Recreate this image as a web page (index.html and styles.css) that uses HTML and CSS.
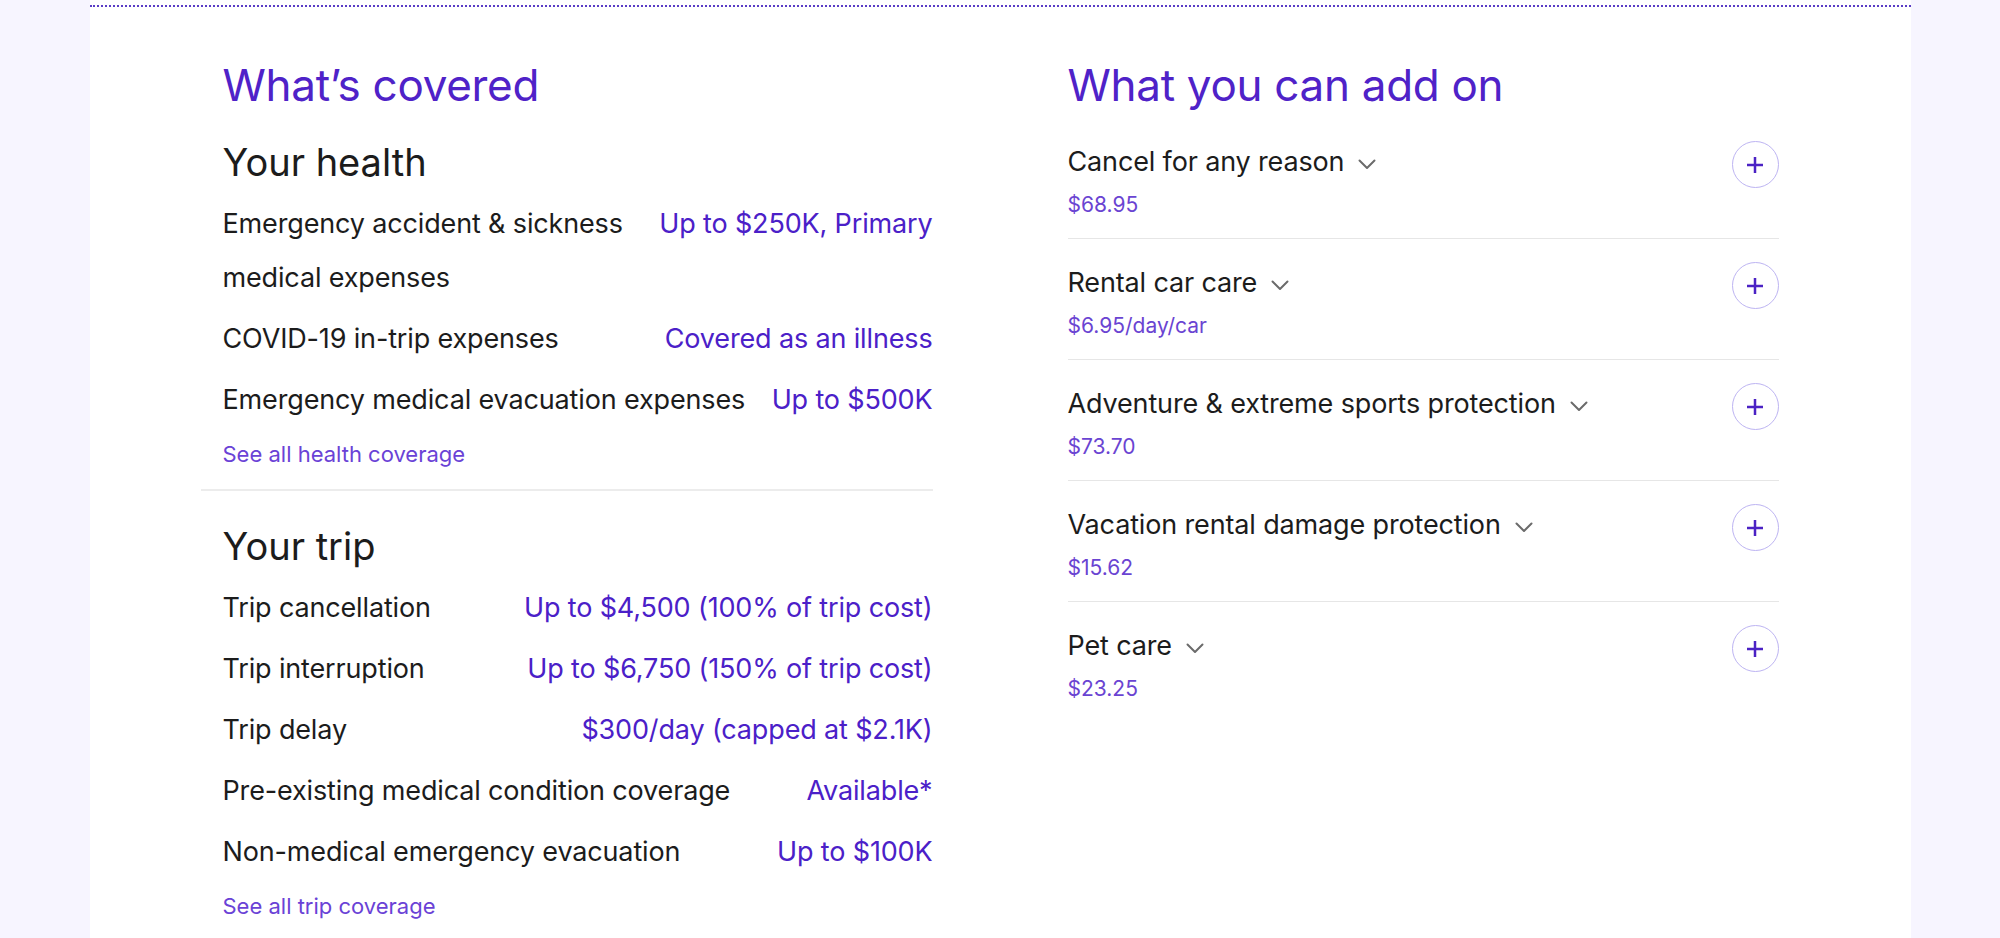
FILE: index.html
```html
<!DOCTYPE html>
<html lang="en">
<head>
<meta charset="utf-8">
<title>Coverage</title>
<link rel="stylesheet" href="styles.css">
</head>
<body>
<main class="panel">
  <div class="rule"></div>
  <div class="columns">
    <section class="covered">
      <h2 class="col-title inset">What’s covered</h2>
      <div class="group group-divided">
        <h3 class="group-title">Your health</h3>
        <ul class="rows">
          <li class="row"><span class="label">Emergency accident &amp; sickness medical expenses</span><span class="value">Up to $250K, Primary</span></li>
          <li class="row"><span class="label">COVID-19 in-trip expenses</span><span class="value">Covered as an illness</span></li>
          <li class="row"><span class="label">Emergency medical evacuation expenses</span><span class="value">Up to $500K</span></li>
        </ul>
        <a class="see-all" href="#">See all health coverage</a>
      </div>
      <div class="group group-trip">
        <h3 class="group-title">Your trip</h3>
        <ul class="rows">
          <li class="row"><span class="label">Trip cancellation</span><span class="value">Up to $4,500 (100% of trip cost)</span></li>
          <li class="row"><span class="label">Trip interruption</span><span class="value">Up to $6,750 (150% of trip cost)</span></li>
          <li class="row"><span class="label">Trip delay</span><span class="value">$300/day (capped at $2.1K)</span></li>
          <li class="row"><span class="label">Pre-existing medical condition coverage</span><span class="value">Available*</span></li>
          <li class="row"><span class="label">Non-medical emergency evacuation</span><span class="value">Up to $100K</span></li>
        </ul>
        <a class="see-all" href="#">See all trip coverage</a>
      </div>
    </section>
    <section class="addons">
      <h2 class="col-title">What you can add on</h2>
      <ul class="addon-list">
        <li class="addon">
          <div class="addon-info">
            <div class="addon-name">Cancel for any reason <svg class="chev" viewBox="0 0 18 11" width="18" height="11"><path d="M1.5 1.5 L9 9 L16.5 1.5"/></svg></div>
            <div class="addon-price">$68.95</div>
          </div>
          <button class="add-btn" aria-label="Add"><svg viewBox="0 0 18 18" width="18" height="18"><path d="M9 1 V17 M1 9 H17"/></svg></button>
        </li>
        <li class="addon">
          <div class="addon-info">
            <div class="addon-name">Rental car care <svg class="chev" viewBox="0 0 18 11" width="18" height="11"><path d="M1.5 1.5 L9 9 L16.5 1.5"/></svg></div>
            <div class="addon-price">$6.95/day/car</div>
          </div>
          <button class="add-btn" aria-label="Add"><svg viewBox="0 0 18 18" width="18" height="18"><path d="M9 1 V17 M1 9 H17"/></svg></button>
        </li>
        <li class="addon">
          <div class="addon-info">
            <div class="addon-name">Adventure &amp; extreme sports protection <svg class="chev" viewBox="0 0 18 11" width="18" height="11"><path d="M1.5 1.5 L9 9 L16.5 1.5"/></svg></div>
            <div class="addon-price">$73.70</div>
          </div>
          <button class="add-btn" aria-label="Add"><svg viewBox="0 0 18 18" width="18" height="18"><path d="M9 1 V17 M1 9 H17"/></svg></button>
        </li>
        <li class="addon">
          <div class="addon-info">
            <div class="addon-name">Vacation rental damage protection <svg class="chev" viewBox="0 0 18 11" width="18" height="11"><path d="M1.5 1.5 L9 9 L16.5 1.5"/></svg></div>
            <div class="addon-price">$15.62</div>
          </div>
          <button class="add-btn" aria-label="Add"><svg viewBox="0 0 18 18" width="18" height="18"><path d="M9 1 V17 M1 9 H17"/></svg></button>
        </li>
        <li class="addon addon-last">
          <div class="addon-info">
            <div class="addon-name">Pet care <svg class="chev" viewBox="0 0 18 11" width="18" height="11"><path d="M1.5 1.5 L9 9 L16.5 1.5"/></svg></div>
            <div class="addon-price">$23.25</div>
          </div>
          <button class="add-btn" aria-label="Add"><svg viewBox="0 0 18 18" width="18" height="18"><path d="M9 1 V17 M1 9 H17"/></svg></button>
        </li>
      </ul>
    </section>
  </div>
</main>
</body>
</html>
```
FILE: styles.css
```css
* { box-sizing: border-box; }

html, body {
  margin: 0;
  padding: 0;
  background: #f7f5ff;
  font-family: Inter, "Noto Sans", "Liberation Sans", sans-serif;
  color: #1c1c1c;
}

.panel {
  width: 1821px;
  min-height: 938px;
  margin: 0 auto;
  background: #ffffff;
  padding-top: 5px;
}

.rule {
  border-top: 2px dotted #5a3cc6;
}

.columns {
  display: grid;
  grid-template-columns: 732px 711px;
  column-gap: 135px;
  padding: 50px 132px 0 111px;
}

.col-title {
  margin: 0;
  font-size: 44px;
  line-height: 56px;
  font-weight: 400;
  letter-spacing: -0.3px;
  color: #4f22c8;
}

.inset { padding-left: 22px; }

.group {
  padding-left: 22px;
}

.group-divided {
  margin-top: 25px;
  padding-bottom: 20px;
  border-bottom: 2px solid #ececec;
}

.group-trip {
  margin-top: 31px;
}

.group-title {
  margin: 0 0 11px;
  font-size: 38px;
  line-height: 48px;
  font-weight: 400;
  color: #1c1c1c;
}

.rows {
  list-style: none;
  margin: 0;
  padding: 0;
  display: flex;
  flex-direction: column;
  gap: 7px;
}

.row {
  display: flex;
  justify-content: space-between;
  gap: 12px;
  font-size: 27px;
  line-height: 54px;
  letter-spacing: -0.15px;
}

.label { color: #1c1c1c; }

.value {
  flex-shrink: 0;
  text-align: right;
  color: #4b20c8;
}

.see-all {
  display: block;
  margin-top: 12px;
  font-size: 22px;
  line-height: 30px;
  color: #6a42d6;
  text-decoration: none;
}

.addon-list {
  list-style: none;
  margin: 5px 0 0;
  padding: 0;
}

.addon {
  display: flex;
  justify-content: space-between;
  align-items: flex-start;
  padding: 26px 0 19px;
  border-bottom: 1px solid #e6e6e6;
}

.addon-last { border-bottom: none; }

.addon-name {
  display: flex;
  align-items: center;
  gap: 14px;
  font-size: 27px;
  line-height: 36px;
  letter-spacing: -0.15px;
  color: #1c1c1c;
}

.chev {
  margin-top: 5px;
  fill: none;
  stroke: #6b6b6b;
  stroke-width: 2;
  stroke-linecap: round;
  stroke-linejoin: round;
}

.addon-price {
  margin-top: 11px;
  font-size: 21px;
  line-height: 28px;
  color: #6a44d2;
}

.add-btn {
  width: 47px;
  height: 47px;
  margin-top: -3px;
  padding: 0;
  border: 1.5px solid #bdb4f2;
  border-radius: 50%;
  background: #ffffff;
  display: flex;
  align-items: center;
  justify-content: center;
  cursor: pointer;
}

.add-btn svg {
  fill: none;
  stroke: #4b22c4;
  stroke-width: 2.5;
}
```
